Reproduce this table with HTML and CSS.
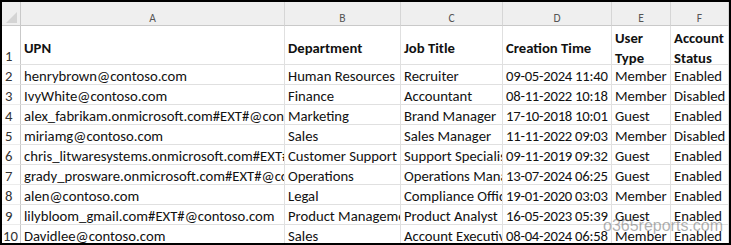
FILE: index.html
```html
<!DOCTYPE html>
<html lang="en">
<head>
<meta charset="utf-8">
<title>Entra ID users</title>
<link rel="stylesheet" href="styles.css">
</head>
<body>
<div class="frame">
  <div class="sheet">
    <div class="corner"><span class="tri"></span></div>
    <div class="colhead">A</div>
    <div class="colhead">B</div>
    <div class="colhead">C</div>
    <div class="colhead">D</div>
    <div class="colhead">E</div>
    <div class="colhead">F</div>

    <div class="rowhead">1</div>
    <div class="cell head">UPN</div>
    <div class="cell head">Department</div>
    <div class="cell head">Job Title</div>
    <div class="cell head">Creation Time</div>
    <div class="cell head wrap">User<br>Type</div>
    <div class="cell head wrap">Account<br>Status</div>

    <div class="rowhead">2</div>
    <div class="cell">henrybrown@contoso.com</div>
    <div class="cell">Human Resources</div>
    <div class="cell">Recruiter</div>
    <div class="cell date">09-05-2024 11:40</div>
    <div class="cell">Member</div>
    <div class="cell">Enabled</div>

    <div class="rowhead">3</div>
    <div class="cell">IvyWhite@contoso.com</div>
    <div class="cell">Finance</div>
    <div class="cell">Accountant</div>
    <div class="cell date">08-11-2022 10:18</div>
    <div class="cell">Member</div>
    <div class="cell">Disabled</div>

    <div class="rowhead">4</div>
    <div class="cell">alex_fabrikam.onmicrosoft.com#EXT#@contoso.com</div>
    <div class="cell">Marketing</div>
    <div class="cell">Brand Manager</div>
    <div class="cell date">17-10-2018 10:01</div>
    <div class="cell">Guest</div>
    <div class="cell">Enabled</div>

    <div class="rowhead">5</div>
    <div class="cell">miriamg@contoso.com</div>
    <div class="cell">Sales</div>
    <div class="cell">Sales Manager</div>
    <div class="cell date">11-11-2022 09:03</div>
    <div class="cell">Member</div>
    <div class="cell">Disabled</div>

    <div class="rowhead">6</div>
    <div class="cell">chris_litwaresystems.onmicrosoft.com#EXT#@contoso.com</div>
    <div class="cell">Customer Support</div>
    <div class="cell">Support Specialist</div>
    <div class="cell date">09-11-2019 09:32</div>
    <div class="cell">Guest</div>
    <div class="cell">Enabled</div>

    <div class="rowhead">7</div>
    <div class="cell">grady_prosware.onmicrosoft.com#EXT#@contoso.com</div>
    <div class="cell">Operations</div>
    <div class="cell">Operations Manager</div>
    <div class="cell date">13-07-2024 06:25</div>
    <div class="cell">Guest</div>
    <div class="cell">Enabled</div>

    <div class="rowhead">8</div>
    <div class="cell">alen@contoso.com</div>
    <div class="cell">Legal</div>
    <div class="cell">Compliance Officer</div>
    <div class="cell date">19-01-2020 03:03</div>
    <div class="cell">Member</div>
    <div class="cell">Enabled</div>

    <div class="rowhead">9</div>
    <div class="cell">lilybloom_gmail.com#EXT#@contoso.com</div>
    <div class="cell">Product Management</div>
    <div class="cell">Product Analyst</div>
    <div class="cell date">16-05-2023 05:39</div>
    <div class="cell">Guest</div>
    <div class="cell">Enabled</div>

    <div class="rowhead two">10</div>
    <div class="cell">Davidlee@contoso.com</div>
    <div class="cell">Sales</div>
    <div class="cell">Account Executive</div>
    <div class="cell date">08-04-2024 06:58</div>
    <div class="cell">Member</div>
    <div class="cell">Enabled</div>
  </div>
  <div class="watermark">o365reports.com</div>
</div>
</body>
</html>
```
FILE: styles.css
```css
html, body {
  margin: 0;
  padding: 0;
  background: #ffffff;
}

.frame {
  position: relative;
  width: 731px;
  height: 245px;
  box-sizing: border-box;
  border: 2px solid #000000;
  overflow: hidden;
  background: #ffffff;
}

.sheet {
  display: grid;
  grid-template-columns: 19px 264px 116px 102px 109px 59px 58px;
  grid-template-rows: 24px 39px repeat(9, 20px);
  font-family: "Carlito", "Lato", sans-serif;
  font-size: 14.7px;
  color: #111111;
}

.sheet > div {
  box-sizing: border-box;
  overflow: hidden;
  white-space: nowrap;
  border-right: 1px solid #e0e0e0;
  border-bottom: 1px solid #e0e0e0;
}

.corner {
  background: #efefef;
  border-right: 1px solid #c9c9c9 !important;
  border-bottom: 1px solid #c9c9c9 !important;
  display: flex;
  align-items: flex-end;
  justify-content: flex-end;
  padding: 0 3px 2px 0;
}

.tri {
  display: block;
  width: 0;
  height: 0;
  border-left: 11px solid transparent;
  border-bottom: 11px solid #d4d4d4;
}

.colhead {
  background: #efefef;
  border-right: 1px solid #d6d6d6 !important;
  border-bottom: 1px solid #c9c9c9 !important;
  display: flex;
  align-items: flex-end;
  justify-content: center;
  padding-bottom: 1px;
  font-size: 11.5px;
  line-height: 12px;
  color: #555555;
}

.rowhead {
  background: #ffffff;
  border-right: 1px solid #c9c9c9 !important;
  border-bottom: 1px solid #ececec !important;
  display: flex;
  align-items: flex-end;
  padding-left: 3px;
  line-height: 15px;
  color: #333333;
}

.rowhead.two {
  padding-left: 1px;
}

.cell {
  display: flex;
  align-items: flex-end;
  padding-left: 3px;
  line-height: 15px;
}

.cell.date {
  letter-spacing: -0.25px;
}

.cell.head {
  font-weight: bold;
  align-items: center;
  padding-top: 6px;
  line-height: 20px;
  overflow: visible;
}

.cell.wrap {
  white-space: normal;
}

.watermark {
  position: absolute;
  left: 601px;
  top: 216px;
  font-family: "Liberation Sans", Arial, sans-serif;
  font-size: 16px;
  line-height: 16px;
  color: rgba(110, 110, 110, 0.55);
  pointer-events: none;
}
```
